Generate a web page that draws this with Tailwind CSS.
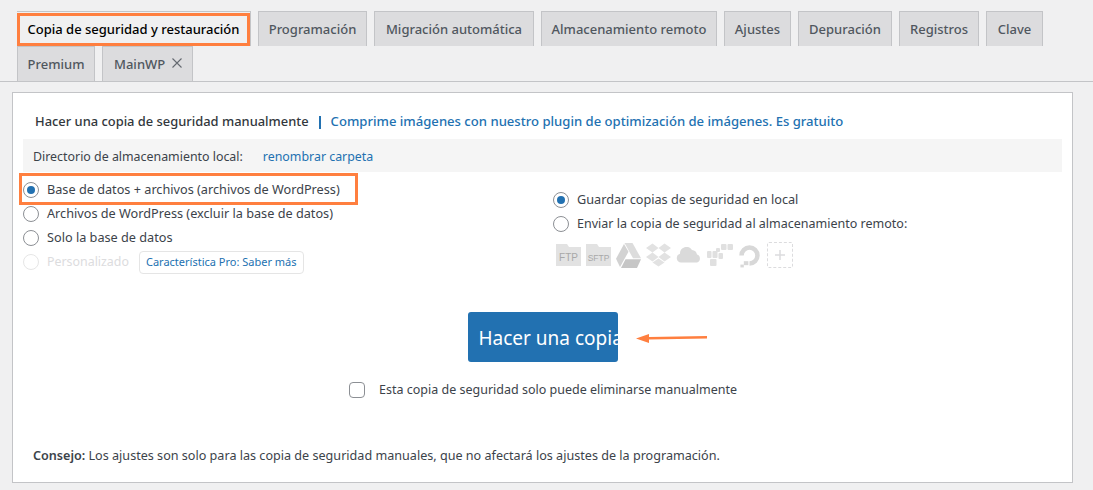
<!DOCTYPE html>
<html lang="en">
<head>
    <meta charset="UTF-8">
    <script src="https://cdn.jsdelivr.net/npm/@tailwindcss/browser@4"></script>
    <title>Copia de seguridad</title>
</head>
<body class="bg-[#f0f0f1] font-['Noto_Sans',sans-serif] text-[12.7px] text-[#3c434a] h-[490px] overflow-hidden">
    <div class="pt-[11px] border-b border-[#c3c4c7] h-[82px]">
        <div class="flex flex-wrap pl-[17px] gap-x-[7px] font-medium text-[13px] text-[#50575e] leading-[24px]">
            <a class="relative w-[234px] h-[35px] border-t border-r border-[#c3c4c7] text-black flex items-center justify-center">Copia de seguridad y restauración
                <span class="absolute left-0 top-[1px] w-[233px] h-[33px] border-[3px] border-[#ff7f3f]"></span>
            </a>
            <a class="w-[109px] h-[35px] flex items-center justify-center bg-[#dcdcde] border border-b-0 border-[#c3c4c7]">Programación</a>
            <a class="w-[160px] h-[35px] flex items-center justify-center bg-[#dcdcde] border border-b-0 border-[#c3c4c7]">Migración automática</a>
            <a class="w-[176px] h-[35px] flex items-center justify-center bg-[#dcdcde] border border-b-0 border-[#c3c4c7]">Almacenamiento remoto</a>
            <a class="w-[67px] h-[35px] flex items-center justify-center bg-[#dcdcde] border border-b-0 border-[#c3c4c7]">Ajustes</a>
            <a class="w-[94px] h-[35px] flex items-center justify-center bg-[#dcdcde] border border-b-0 border-[#c3c4c7]">Depuración</a>
            <a class="w-[80px] h-[35px] flex items-center justify-center bg-[#dcdcde] border border-b-0 border-[#c3c4c7]">Registros</a>
            <a class="w-[57px] h-[35px] flex items-center justify-center bg-[#dcdcde] border border-b-0 border-[#c3c4c7]">Clave</a>
            <a class="w-[78px] h-[35px] flex items-center justify-center bg-[#dcdcde] border border-b-0 border-[#c3c4c7]">Premium</a>
            <a class="w-[91px] h-[35px] flex items-center pl-[11px] gap-[7px] bg-[#dcdcde] border border-b-0 border-[#c3c4c7]">MainWP
                <svg width="10" height="10" viewBox="0 0 10 10" class="mb-[3px]"><path d="M0.5 0.5L9.5 9.5M9.5 0.5L0.5 9.5" stroke="#646970" stroke-width="1.1"/></svg>
            </a>
        </div>
    </div>

    <div class="mt-[10px] mx-[12px] w-[1061px] h-[391px] bg-white border border-[#c3c4c7] relative">
        <div class="pl-[22px] pt-[12px] h-[46px] flex items-center font-medium text-[12.9px] text-[#32373c]">
            <span>Hacer una copia de seguridad manualmente</span>
            <span class="mx-[10px] w-[2px] h-[13px] bg-[#2271b1]"></span>
            <a class="text-[13.1px] text-[#2271b1]">Comprime imágenes con nuestro plugin de optimización de imágenes. Es gratuito</a>
        </div>
        <div class="mx-[10px] h-[33px] bg-[#f5f5f5] flex items-center pl-[10px] pt-[3px] text-[12.4px]">
            <span>Directorio de almacenamiento local:</span>
            <a class="ml-[20px] text-[#2271b1]">renombrar carpeta</a>
        </div>

        <div class="flex mt-[6px] pl-[10px]">
            <div class="w-[530px] flex flex-col">
                <label class="h-[24px] flex items-center gap-[8px]">
                    <span class="w-[16px] h-[16px] rounded-full border border-[#8c8f94] flex items-center justify-center"><span class="w-[8px] h-[8px] rounded-full bg-[#2271b1]"></span></span>
                    Base de datos + archivos (archivos de WordPress)
                </label>
                <label class="h-[24px] flex items-center gap-[8px]">
                    <span class="w-[16px] h-[16px] rounded-full border border-[#8c8f94]"></span>
                    Archivos de WordPress (excluir la base de datos)
                </label>
                <label class="h-[24px] flex items-center gap-[8px]">
                    <span class="w-[16px] h-[16px] rounded-full border border-[#8c8f94]"></span>
                    Solo la base de datos
                </label>
                <label class="h-[24px] flex items-center gap-[8px] text-[12.4px] text-[#dcdcde]">
                    <span class="w-[16px] h-[16px] rounded-full border border-[#e6e6e6]"></span>
                    Personalizado
                    <a class="ml-[2px] h-[23px] px-[6px] flex items-center border border-[#e5e5e5] rounded-[4px] text-[11px] text-[#2271b1]">Característica Pro: Saber más</a>
                </label>
            </div>
            <div class="flex flex-col pt-[10px]">
                <label class="h-[24px] flex items-center gap-[8px]">
                    <span class="w-[16px] h-[16px] rounded-full border border-[#8c8f94] flex items-center justify-center"><span class="w-[8px] h-[8px] rounded-full bg-[#2271b1]"></span></span>
                    Guardar copias de seguridad en local
                </label>
                <label class="h-[24px] flex items-center gap-[8px] text-[12.5px]">
                    <span class="w-[16px] h-[16px] rounded-full border border-[#8c8f94]"></span>
                    Enviar la copia de seguridad al almacenamiento remoto:
                </label>
                <div class="flex items-center gap-[5px] ml-[3px] mt-[6px] h-[26px]">
                    <svg width="25" height="22" viewBox="0 0 25 22"><path d="M0 0h11l2 3h12v19H0z" fill="#e2e2e2"/><text x="12.5" y="17" text-anchor="middle" font-size="10" font-family="Liberation Sans" fill="#a8a8a8">FTP</text></svg>
                    <svg width="25" height="22" viewBox="0 0 25 22"><path d="M0 0h11l2 3h12v19H0z" fill="#e2e2e2"/><text x="12.5" y="17" text-anchor="middle" font-size="8.5" font-family="Liberation Sans" fill="#a8a8a8">SFTP</text></svg>
                    <svg width="25" height="25" viewBox="0 0 25 23" preserveAspectRatio="none"><path d="M8.500 0h8l8.500 14h-8z" fill="#dcdcdc"/><path d="M8 1L0 14.500 4 22l8.500-14z" fill="#d2d2d2"/><path d="M5 23h16l4-8H9.500z" fill="#c6c6c6"/></svg>
                    <svg width="25" height="24" viewBox="0 0 25 24"><path d="M6.500 0.500L0 5l6.500 4.500L12.500 5zM18.500 0.500L12.500 5l6 4.500L25 5zM0 14l6.500 4.500 6-4.500-6-4.500zM18.500 9.500l-6 4.500 6 4.500L25 14zM6.500 19.500l6 4 6-4-6-4z" fill="#e2e2e2"/></svg>
                    <svg width="26" height="16" viewBox="0 0 26 16"><path d="M5 15.500a4.500 4.500 0 0 1-1-8.800A6.500 6.500 0 0 1 16 3a5.500 5.500 0 0 1 5 4.500 4.200 4.200 0 0 1 0 8z" fill="#dadada"/></svg>
                    <svg width="26" height="22" viewBox="0 0 26 22" fill="#e0e0e0"><rect x="14" y="0" width="5.500" height="6" rx="1"/><rect x="20.500" y="0" width="5.500" height="6" rx="1"/><rect x="9" y="4" width="4" height="4" rx="1"/><rect x="0" y="7" width="4.500" height="7" rx="1"/><rect x="5.500" y="7" width="5" height="7" rx="1"/><rect x="11.500" y="9" width="4.500" height="6" rx="1"/><rect x="3" y="15" width="6.500" height="7" rx="1"/></svg>
                    <svg width="25" height="25" viewBox="0 0 22 22" class="-ml-[1px]"><path d="M11 20v-4a5 5 0 1 0-5-5H2a9 9 0 1 1 9 9z" fill="#d8d8d8"/><rect x="6" y="16" width="4" height="3.500" fill="#d8d8d8"/><rect x="3" y="19" width="3" height="2.500" fill="#d8d8d8"/></svg>
                    <div class="w-[26px] h-[26px] border border-dashed border-[#dcdcde] rounded-[2px] flex items-center justify-center">
                        <svg width="10" height="10" viewBox="0 0 10 10"><path d="M5 0v10M0 5h10" stroke="#dcdcde" stroke-width="1.500"/></svg>
                    </div>
                </div>
            </div>
        </div>

        <div class="mt-[38px] flex justify-center">
            <button class="w-[150px] h-[50px] pt-[2px] bg-[#2271b1] text-white text-[19px] rounded-[3px] overflow-hidden whitespace-nowrap text-left pl-[11px]">Hacer una copia</button>
        </div>
        <div class="mt-[20px] ml-[336px] flex items-center gap-[14px] h-[16px] text-[12.5px]">
            <span class="w-[16px] h-[16px] rounded-[4px] border border-[#8c8f94]"></span>
            Esta copia de seguridad solo puede eliminarse manualmente
        </div>
        <p class="mt-[49px] ml-[20px] text-[12.6px]"><b class="font-semibold">Consejo:</b> Los ajustes son solo para las copia de seguridad manuales, que no afectará los ajustes de la programación.</p>

        <!-- annotations drawn over the screenshot -->
        <div class="absolute left-[6px] top-[80px] w-[339px] h-[32px] border-[3px] border-[#ff7f3f]"></div>
        <svg class="absolute left-[622px] top-[239px]" width="74" height="12" viewBox="0 0 74 12"><path d="M1 6.500L14 2v3l58-1v2.500l-58 1v3.500z" fill="#ff7f3f"/></svg>
    </div>
</body>
</html>
